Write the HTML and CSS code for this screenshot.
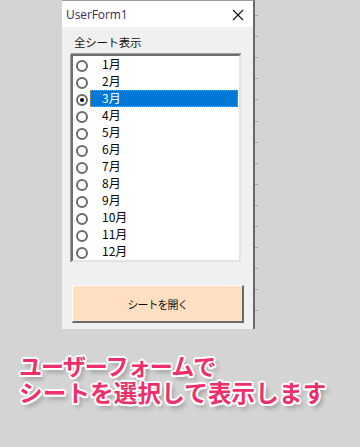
FILE: index.html
```html
<!DOCTYPE html>
<html lang="ja">
<head>
<meta charset="utf-8">
<link rel="stylesheet" href="styles.css">
</head>
<body>
<div class="stage">
  <div class="window">
    <div class="titlebar">
      <span class="title">UserForm1</span>
      <svg class="close" width="12" height="12" viewBox="0 0 12 12"><path d="M1 1 L11 11 M11 1 L1 11" stroke="#111" stroke-width="1.1" fill="none"/></svg>
    </div>
    <div class="formbody">
      <div class="label">全シート表示</div>
      <div class="listbox">
        <div class="row"><span class="radio"></span><span class="item">1月</span></div>
        <div class="row"><span class="radio"></span><span class="item">2月</span></div>
        <div class="row"><span class="radio on"></span><span class="item sel">3月</span></div>
        <div class="row"><span class="radio"></span><span class="item">4月</span></div>
        <div class="row"><span class="radio"></span><span class="item">5月</span></div>
        <div class="row"><span class="radio"></span><span class="item">6月</span></div>
        <div class="row"><span class="radio"></span><span class="item">7月</span></div>
        <div class="row"><span class="radio"></span><span class="item">8月</span></div>
        <div class="row"><span class="radio"></span><span class="item">9月</span></div>
        <div class="row"><span class="radio"></span><span class="item">10月</span></div>
        <div class="row"><span class="radio"></span><span class="item">11月</span></div>
        <div class="row"><span class="radio"></span><span class="item">12月</span></div>
      </div>
      <div class="button">シートを開く</div>
    </div>
  </div>
  <div class="ticks"></div>
</div>
<div class="caption">
  <div class="line one">ユーザーフォームで</div>
  <div class="line two">シートを選択して表示します</div>
</div>
</body>
</html>
```
FILE: styles.css
```css
html, body {
  margin: 0;
  padding: 0;
  background: #d4d4d4;
  width: 360px;
  height: 447px;
  overflow: hidden;
  font-family: "Noto Sans CJK JP", "Noto Sans", sans-serif;
}
.stage {
  display: flex;
  padding-left: 62px;
  align-items: flex-start;
}
.window {
  width: 191px;
  height: 328px;
  border-top: 1px solid #9a9a9a;
  border-right: 2px solid #6a6a6a;
  background: #f0f0f0;
  display: flex;
  flex-direction: column;
}
.ticks {
  width: 3px;
  height: 330px;
  background: repeating-linear-gradient(to bottom, transparent 0, transparent 15px, #a8a8a8 15px, #a8a8a8 16px, transparent 16px, transparent 21.1px);
}
.titlebar {
  height: 26px;
  background: #ffffff;
  display: flex;
  align-items: center;
  justify-content: space-between;
  padding: 0 9px 0 4px;
}
.title {
  font-family: "Open Sans", "Noto Sans", sans-serif;
  font-size: 12px;
  color: #3a2a58;
  letter-spacing: -0.1px;
}
.close { display: block; margin-top: 1px; }
.formbody {
  padding: 8px 0 6px 0;
  display: flex;
  flex-direction: column;
}
.label {
  margin-left: 12px;
  font-size: 11.5px;
  line-height: 14px;
  height: 14px;
  color: #111;
  letter-spacing: -0.3px;
}
.listbox {
  margin: 5px 0 0 9px;
  width: 166px;
  height: 204px;
  background: #fff;
  border-top: 2px solid #6f6f6f;
  border-left: 2px solid #6f6f6f;
  border-bottom: 2px solid #e3e3e3;
  border-right: 2px solid #e3e3e3;
  box-shadow: 0 -1px 0 #a0a0a0, -1px 0 0 #a0a0a0;
  display: flex;
  flex-direction: column;
}
.row {
  height: 17px;
  display: flex;
  align-items: center;
  padding-left: 4px;
}
.radio {
  width: 8px;
  height: 8px;
  border: 2px solid #6a6a6a;
  border-radius: 50%;
  flex: none;
  margin-top: 2px;
  margin-left: -1px;
  position: relative;
}
.radio.on::after {
  content: "";
  position: absolute;
  left: 2px;
  top: 2px;
  width: 4px;
  height: 4px;
  border-radius: 50%;
  background: #000;
}
.item {
  margin-left: 2px;
  align-self: stretch;
  flex: 1;
  padding-left: 11px;
  font-size: 12px;
  line-height: 13px;
  color: #000;
  box-sizing: border-box;
  border: 1px solid transparent;
}
.item.sel {
  background: #0078d7;
  color: #fff;
  border: 1px dotted #e8901a;
  margin-right: 1px;
}
.button {
  margin: 23px 0 0 10px;
  width: 169px;
  height: 35px;
  background: #ffdfc2;
  border-top: 1px solid #fff;
  border-left: 1px solid #fff;
  border-right: 2px solid #6a6a6a;
  border-bottom: 2px solid #6a6a6a;
  display: flex;
  align-items: center;
  justify-content: center;
  font-size: 11px;
  color: #111;
  letter-spacing: -1px;
}
.caption {
  margin: 22px 0 0 19px;
  font-weight: 700;
  color: #ef2f6a;
  text-shadow:
    2px 0 0 #fff, -2px 0 0 #fff, 0 2px 0 #fff, 0 -2px 0 #fff,
    1.5px 1.5px 0 #fff, -1.5px 1.5px 0 #fff, 1.5px -1.5px 0 #fff, -1.5px -1.5px 0 #fff,
    3px 4px 5px rgba(0,0,0,0.35);
  white-space: nowrap;
}
.line {
  height: 27px;
  line-height: 27px;
  overflow: visible;
}
.line.one {
  font-size: 23px;
  letter-spacing: -0.9px;
}
.line.two {
  font-size: 23.5px;
  letter-spacing: 0.2px;
}
```
